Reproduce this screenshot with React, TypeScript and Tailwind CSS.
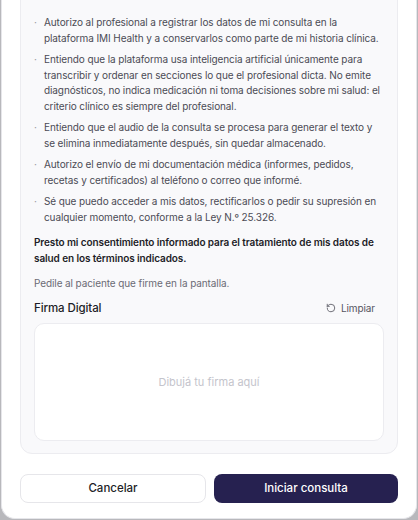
import React from 'react';
import { RotateCcw } from 'lucide-react';

const bullets = [
  'Autorizo al profesional a registrar los datos de mi consulta en la plataforma IMI Health y a conservarlos como parte de mi historia clínica.',
  'Entiendo que la plataforma usa inteligencia artificial únicamente para transcribir y ordenar en secciones lo que el profesional dicta. No emite diagnósticos, no indica medicación ni toma decisiones sobre mi salud: el criterio clínico es siempre del profesional.',
  'Entiendo que el audio de la consulta se procesa para generar el texto y se elimina inmediatamente después, sin quedar almacenado.',
  'Autorizo el envío de mi documentación médica (informes, pedidos, recetas y certificados) al teléfono o correo que informé.',
  'Sé que puedo acceder a mis datos, rectificarlos o pedir su supresión en cualquier momento, conforme a la Ley N.º 25.326.',
];

export default function App() {
  return (
    <div
      className="w-[418px] h-[520px] bg-[#b8b8bc] px-[1px] overflow-hidden"
      style={{ fontFamily: 'Inter, "Noto Sans", sans-serif' }}
    >
      <div className="h-[519px] bg-white rounded-b-[14px] border-x border-b border-[#e6e6ea] flex flex-col overflow-hidden">
        {/* Scrolled consent content */}
        <div className="flex-1 min-h-0 overflow-hidden flex flex-col justify-end px-[18px] pb-[6px]">
          <div className="shrink-0 rounded-xl border border-[#ececf0] bg-[#f9f9fb] px-[13px] pt-[60px] pb-[12px]">
            <ul className="flex flex-col gap-[6px]">
              {bullets.map((b, i) => (
                <li key={i} className="flex gap-[5px] text-[10px] leading-[15.5px] tracking-[-0.1px] text-[#4b4b55]">
                  <span className="w-[5px] shrink-0 text-[#9a9aa3]">·</span>
                  <span>{b}</span>
                </li>
              ))}
            </ul>

            <p className="mt-[9px] text-[10px] leading-[16px] tracking-[-0.1px] font-semibold text-[#1d1d27]">
              Presto mi consentimiento informado para el tratamiento de mis datos de salud en los términos indicados.
            </p>

            <p className="mt-[9px] text-[10px] leading-[16px] tracking-[-0.1px] text-[#6b6b75]">
              Pedile al paciente que firme en la pantalla.
            </p>

            <div className="mt-[9px] flex items-center justify-between">
              <span className="text-[11.5px] leading-[16px] tracking-[-0.1px] font-medium text-[#1d1d27]">Firma Digital</span>
              <button className="flex items-center gap-[5px] text-[10px] tracking-[-0.1px] text-[#55555f] pr-[9px]">
                <RotateCcw size={10} strokeWidth={2} />
                Limpiar
              </button>
            </div>

            <div className="mt-[7px] h-[118px] rounded-[10px] border border-[#ececf0] bg-white flex items-center justify-center">
              <span className="text-[11px] text-[#c4c4cc]">Dibujá tu firma aquí</span>
            </div>
          </div>
        </div>

        {/* Footer actions */}
        <div className="shrink-0 flex gap-[8px] px-[18px] pt-[14px] pb-[15px]">
          <button className="flex-1 h-[29px] rounded-lg border border-[#e6e6ea] bg-white text-[11.5px] font-medium text-[#1d1d27]">
            Cancelar
          </button>
          <button className="flex-1 h-[29px] rounded-lg bg-[#262150] text-[11.5px] font-medium text-white">
            Iniciar consulta
          </button>
        </div>
      </div>
    </div>
  );
}
